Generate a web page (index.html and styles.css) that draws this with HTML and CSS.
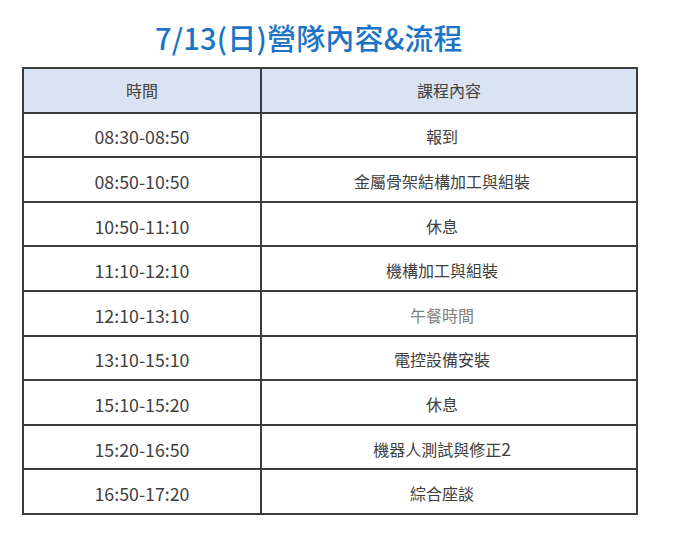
FILE: index.html
```html
<!DOCTYPE html>
<html lang="zh-Hant">
<head>
<meta charset="utf-8">
<link rel="stylesheet" href="styles.css">
</head>
<body>
<div class="page">
  <h1 class="title">7/13(日)營隊內容&amp;流程</h1>
  <table class="schedule">
    <thead>
      <tr><th class="c-time">時間</th><th class="c-item">課程內容</th></tr>
    </thead>
    <tbody>
      <tr><td class="t">08:30-08:50</td><td class="d">報到</td></tr>
      <tr><td class="t">08:50-10:50</td><td class="d">金屬骨架結構加工與組裝</td></tr>
      <tr><td class="t">10:50-11:10</td><td class="d">休息</td></tr>
      <tr><td class="t">11:10-12:10</td><td class="d">機構加工與組裝</td></tr>
      <tr><td class="t">12:10-13:10</td><td class="d muted">午餐時間</td></tr>
      <tr><td class="t">13:10-15:10</td><td class="d">電控設備安裝</td></tr>
      <tr><td class="t">15:10-15:20</td><td class="d">休息</td></tr>
      <tr><td class="t">15:20-16:50</td><td class="d">機器人測試與修正<span class="num">2</span></td></tr>
      <tr><td class="t">16:50-17:20</td><td class="d">綜合座談</td></tr>
    </tbody>
  </table>
</div>
</body>
</html>
```
FILE: styles.css
```css
html, body {
  margin: 0;
  padding: 0;
  background: #ffffff;
}
.page {
  padding: 17px 0 0 22px;
  font-family: "Noto Sans CJK TC", "Noto Sans", sans-serif;
}
.title {
  margin: 0 0 10px 133px;
  font-size: 29px;
  line-height: 40px;
  font-weight: 500;
  color: #1b74c6;
  letter-spacing: 0.2px;
}
.schedule {
  border-collapse: collapse;
  width: 616px;
  table-layout: fixed;
  color: #404040;
  font-size: 16px;
}
.schedule th,
.schedule td {
  border: 2px solid #3c3c3c;
  height: 42.7px;
  padding: 0;
  text-align: center;
  vertical-align: middle;
  font-weight: 400;
  line-height: 20px;
}
.schedule td {
  padding-top: 3px;
  height: 39.6px;
}
.schedule td.t {
  font-size: 17.8px;
}
.schedule td.d {
  padding-right: 14px;
}
.num {
  font-size: 17.5px;
}
.schedule thead th {
  background: #dae3f2;
}
.c-time {
  width: 236px;
}
.muted {
  color: #808080;
}
```
